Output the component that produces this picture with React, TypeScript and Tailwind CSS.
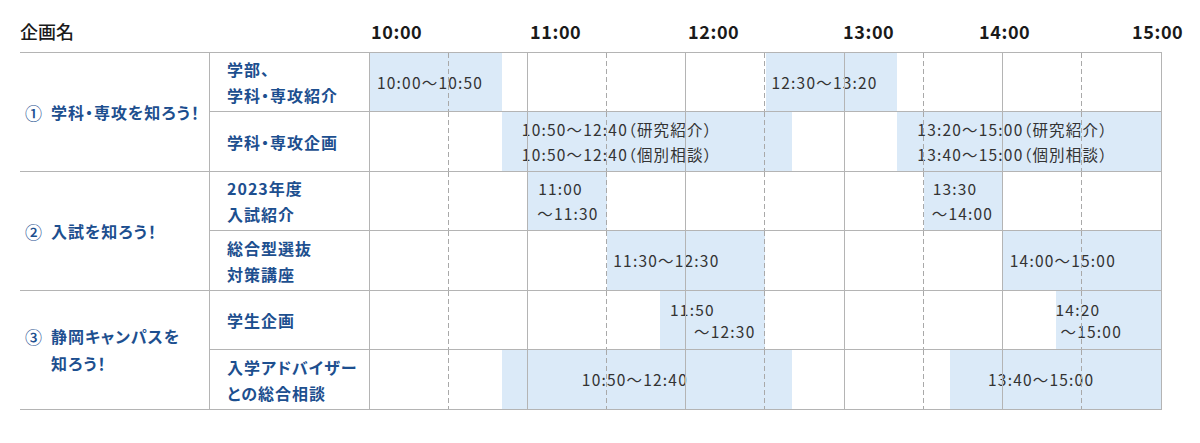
import React from "react";

type Line = [string, number];
type Bar = { s: number; e: number; lines: Line[]; pl: number; lead?: number };

const PX_PER_MIN = 791 / 300;

const rows: Bar[][] = [
  [
    { s: 0, e: 50, lines: [["10:00〜10:50", 0]], pl: 7 },
    { s: 150, e: 200, lines: [["12:30〜13:20", 0]], pl: 6 },
  ],
  [
    {
      s: 50,
      e: 160,
      lines: [
        ["10:50〜12:40（研究紹介）", 0],
        ["10:50〜12:40（個別相談）", 0],
      ],
      pl: 20,
      lead: 25,
    },
    {
      s: 200,
      e: 300,
      lines: [
        ["13:20〜15:00（研究紹介）", 0],
        ["13:40〜15:00（個別相談）", 0],
      ],
      pl: 20,
      lead: 25,
    },
  ],
  [
    { s: 60, e: 90, lines: [["11:00", 1], ["〜11:30", 0]], pl: 9, lead: 25 },
    { s: 210, e: 240, lines: [["13:30", 1], ["〜14:00", 0]], pl: 8, lead: 25 },
  ],
  [
    { s: 90, e: 150, lines: [["11:30〜12:30", 0]], pl: 6 },
    { s: 240, e: 300, lines: [["14:00〜15:00", 0]], pl: 7 },
  ],
  [
    { s: 110, e: 150, lines: [["11:50", 0], ["〜12:30", 24]], pl: 10, lead: 22 },
    { s: 260, e: 300, lines: [["14:20", 0], ["〜15:00", 5]], pl: 0, lead: 22 },
  ],
  [
    { s: 50, e: 160, lines: [["10:50〜12:40", 0]], pl: 80 },
    { s: 220, e: 300, lines: [["13:40〜15:00", 0]], pl: 38 },
  ],
];

const groups = [
  {
    num: "①",
    label: ["学科・専攻を知ろう！"],
    subs: [["学部、", "学科・専攻紹介"], ["学科・専攻企画"]],
  },
  {
    num: "②",
    label: ["入試を知ろう！"],
    subs: [["2023年度", "入試紹介"], ["総合型選抜", "対策講座"]],
  },
  {
    num: "③",
    label: ["静岡キャンパスを", "知ろう！"],
    subs: [["学生企画"], ["入学アドバイザー", "との総合相談"]],
  },
];

function GridLines() {
  return (
    <div className="pointer-events-none absolute inset-0 z-10 flex">
      {Array.from({ length: 10 }).map((_, i) => (
        <div key={i} className="flex flex-1 justify-end">
          {i < 9 &&
            (i % 2 === 0 ? (
              <div className="h-full w-px bg-[repeating-linear-gradient(to_bottom,#a9a9a9_0px,#a9a9a9_5px,transparent_5px,transparent_8px)]" />
            ) : (
              <div className="h-full w-px bg-[#b4b4b4]" />
            ))}
        </div>
      ))}
    </div>
  );
}

function Timeline({ bars }: { bars: Bar[] }) {
  return (
    <div className="relative h-full w-[792px] border-r border-[#b4b4b4]">
      {bars.map((b, i) => (
        <div
          key={i}
          className="absolute top-0 bottom-0 flex flex-col justify-center bg-[#dbeaf8] text-[15.5px] tracking-[1.2px] text-[#333] whitespace-nowrap [font-feature-settings:'palt']"
          style={{
            left: b.s * PX_PER_MIN,
            width: (b.e - b.s) * PX_PER_MIN,
            paddingLeft: b.pl,
            lineHeight: `${b.lead ?? 25}px`,
          }}
        >
          {b.lines.map(([t, ml], j) => (
            <div key={j} style={{ marginLeft: ml }}>
              {t}
            </div>
          ))}
        </div>
      ))}
      <GridLines />
    </div>
  );
}

export default function App() {
  const times = [
    { t: "10:00", w: "w-[159px]" },
    { t: "11:00", w: "w-[158px]" },
    { t: "12:00", w: "w-[155px]" },
    { t: "13:00", w: "w-[136px]" },
    { t: "14:00", w: "w-[153px]" },
    { t: "15:00", w: "w-[60px]" },
  ];
  let rowIdx = 0;
  return (
    <div className="h-[443px] w-[1200px] bg-white font-['Noto_Sans_CJK_JP','Noto_Sans',sans-serif]">
      <div className="flex h-[52px] items-center pl-[20px] pt-[10px] text-[18px] font-medium text-[#1a1a1a]">
        <div className="w-[351px]">企画名</div>
        {times.map((x) => (
          <div key={x.t} className={`${x.w} shrink-0 tracking-[0.6px] font-semibold`}>
            {x.t}
          </div>
        ))}
      </div>
      <div className="ml-[20px] w-[1142px] border-t border-[#b4b4b4]">
        {groups.map((g, gi) => (
          <div key={gi} className="flex border-b border-[#b4b4b4]">
            <div className="flex w-[190px] shrink-0 items-center border-r border-[#b4b4b4] pl-[5px] text-[16px] font-bold leading-[27px] tracking-[1px] text-[#1d4f8f] [font-feature-settings:'palt']">
              <div className="flex items-start">
                <span className="mr-[8px] text-[17px] font-medium">{g.num}</span>
                <div>
                  {g.label.map((l, i) => (
                    <div key={i}>{l}</div>
                  ))}
                </div>
              </div>
            </div>
            <div className="flex flex-col">
              {g.subs.map((s, si) => {
                const bars = rows[rowIdx++];
                return (
                  <div
                    key={si}
                    className={`flex h-[59px] ${si === 0 ? "border-b border-[#b4b4b4]" : ""}`}
                  >
                    <div className="flex w-[160px] shrink-0 flex-col justify-center border-r border-[#b4b4b4] pl-[17px] text-[16px] font-bold leading-[26px] tracking-[1px] text-[#1d4f8f] [font-feature-settings:'palt']">
                      {s.map((l, i) => (
                        <div key={i}>{l}</div>
                      ))}
                    </div>
                    <Timeline bars={bars} />
                  </div>
                );
              })}
            </div>
          </div>
        ))}
      </div>
    </div>
  );
}
